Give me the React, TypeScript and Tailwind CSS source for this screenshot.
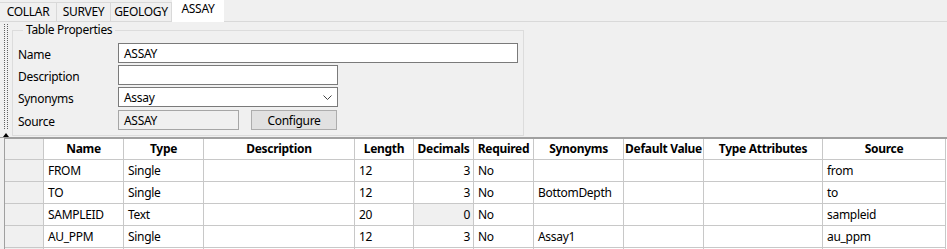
import type { FC } from "react"

const tabs = ["COLLAR", "SURVEY", "GEOLOGY", "ASSAY"]
const tabWidths: Record<string, string> = {
  COLLAR: "w-[57px]",
  SURVEY: "w-[54px]",
  GEOLOGY: "w-[61px]",
  ASSAY: "w-[52px]",
}

const columns = [
  { title: "", align: "left" },
  { title: "Name", align: "left" },
  { title: "Type", align: "left" },
  { title: "Description", align: "left" },
  { title: "Length", align: "left" },
  { title: "Decimals", align: "right" },
  { title: "Required", align: "left" },
  { title: "Synonyms", align: "left" },
  { title: "Default Value", align: "left" },
  { title: "Type Attributes", align: "left" },
  { title: "Source", align: "left" },
]

interface Field {
  name: string
  type: string
  length: string
  decimals: string
  readonlyDecimals?: boolean
  synonyms: string
  source: string
}

const fields: Field[] = [
  { name: "FROM", type: "Single", length: "12", decimals: "3", synonyms: "", source: "from" },
  { name: "TO", type: "Single", length: "12", decimals: "3", synonyms: "BottomDepth", source: "to" },
  { name: "SAMPLEID", type: "Text", length: "20", decimals: "0", readonlyDecimals: true, synonyms: "", source: "sampleid" },
  { name: "AU_PPM", type: "Single", length: "12", decimals: "3", synonyms: "Assay1", source: "au_ppm" },
]

const grid = "grid grid-cols-[39px_80px_80px_151px_59px_60px_60px_90px_80px_119px_123px]"

const FormRow: FC<{ label: string; children: React.ReactNode; className?: string }> = ({ label, children, className }) => (
  <div className={`flex items-center h-[20px] ${className ?? ""}`}>
    <span className="w-[100px] shrink-0 pt-[3px]">{label}</span>
    {children}
  </div>
)

const Cell: FC<{ children?: React.ReactNode; className?: string }> = ({ children, className }) => (
  <div className={`border-r border-b border-[#c8c8c8] flex items-center px-[4px] whitespace-nowrap overflow-hidden ${className ?? ""}`}>
    {children}
  </div>
)

export default function App() {
  return (
    <div className="w-[947px] h-[249px] overflow-hidden bg-[#f0f0f0] text-black text-[12px] tracking-[-0.3px] font-['Noto_Sans','Segoe_UI',sans-serif] leading-[14px]">
      {/* tabs */}
      <div className="flex items-end h-[22px] border-b border-[#d9d9d9]">
        {tabs.map((t) => {
          const selected = t === "ASSAY"
          return (
            <div
              key={t}
              className={`${tabWidths[t]} flex items-center justify-center ${
                selected
                  ? "h-[22px] -mb-px bg-white pb-[4px]"
                  : "h-[19px] border-t border-r border-[#d9d9d9] bg-[#f0f0f0]"
              }`}
            >
              {t}
            </div>
          )
        })}
      </div>

      {/* table properties panel */}
      <div className="flex h-[116px] border-b border-[#a0a0a0]">
        <div className="w-[12px] shrink-0 flex flex-col items-center">
          <div className="w-[4px] h-[106px] mt-[2px] border-x border-dotted border-[#606060]" />
          <svg width="6" height="4" viewBox="0 0 6 4" className="mt-[4px]">
            <polygon points="0,4 3,0 6,4" fill="#000" />
          </svg>
        </div>

        <fieldset className="mt-[1px] w-[510px] h-[113px] border border-[#dcdcdc] px-[5px] pt-[6px]">
          <legend className="ml-[5px] px-[3px] leading-[14px]">Table Properties</legend>
          <div className="flex flex-col gap-[2px]">
            <FormRow label="Name">
              <div className="w-[400px] h-[20px] bg-white border border-[#7a7a7a] flex items-center px-[5px] pt-[2px]">ASSAY</div>
            </FormRow>
            <FormRow label="Description">
              <div className="w-[220px] h-[20px] bg-white border border-[#7a7a7a]" />
            </FormRow>
            <FormRow label="Synonyms">
              <div className="w-[220px] h-[20px] bg-white border border-[#7a7a7a] flex items-center justify-between pl-[5px] pr-[5px]">
                <span className="pt-[2px]">Assay</span>
                <svg width="9" height="5" viewBox="0 0 9 5">
                  <polyline points="0.5,0.5 4.5,4.5 8.5,0.5" fill="none" stroke="#444" strokeWidth="1" />
                </svg>
              </div>
            </FormRow>
            <FormRow label="Source" className="mt-[1px]">
              <div className="w-[121px] h-[20px] bg-[#f0f0f0] border border-[#a6a6a6] flex items-center px-[5px] pt-[2px]">ASSAY</div>
              <button className="ml-[12px] w-[86px] h-[20px] bg-[#e1e1e1] border border-[#adadad] flex items-center justify-center pt-[2px]">
                Configure
              </button>
            </FormRow>
          </div>
        </fieldset>
      </div>

      {/* field grid */}
      <div className="ml-[4px] border-l border-t border-[#a0a0a0] bg-white">
        <div className={`${grid} h-[21px]`}>
          {columns.map((c, i) => (
            <Cell key={i} className={`justify-center font-bold ${i === 0 ? "bg-[#f0f0f0]" : "bg-white"}`}>
              {c.title}
            </Cell>
          ))}
        </div>
        {fields.map((f) => (
          <div key={f.name} className={`${grid} h-[22px]`}>
            <Cell className="bg-[#f0f0f0]" />
            <Cell>{f.name}</Cell>
            <Cell>{f.type}</Cell>
            <Cell />
            <Cell>{f.length}</Cell>
            <Cell className={`justify-end pr-[3px] ${f.readonlyDecimals ? "bg-[#f0f0f0]" : ""}`}>{f.decimals}</Cell>
            <Cell className="px-[2px]">No</Cell>
            <Cell>{f.synonyms}</Cell>
            <Cell />
            <Cell />
            <Cell>{f.source}</Cell>
          </div>
        ))}
        <div className={`${grid} h-[22px]`}>
          <Cell className="bg-[#f0f0f0]" />
          {columns.slice(1).map((c) => (
            <Cell key={c.title} />
          ))}
        </div>
      </div>
    </div>
  )
}
